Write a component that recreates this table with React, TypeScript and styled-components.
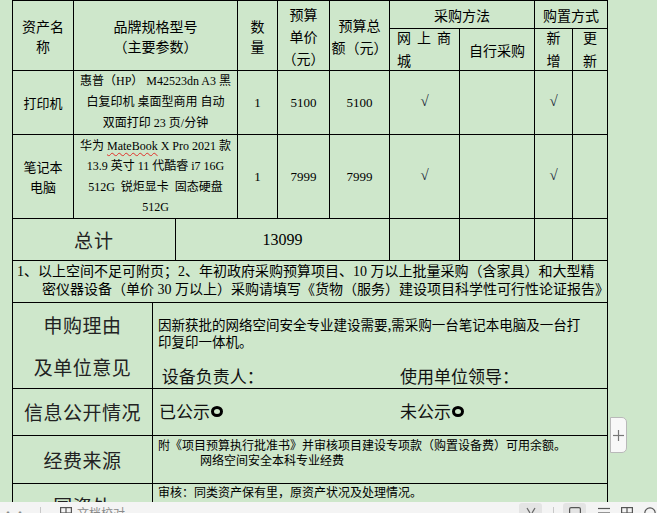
import React from "react";
import styled, { createGlobalStyle } from "styled-components";

const GREEN = "#cee7cb";
const SANS = `"Noto Sans CJK SC", "Noto Sans", sans-serif`;
const MIX = `"Liberation Serif", "Noto Sans CJK SC", serif`;

const Global = createGlobalStyle`
  html, body { margin: 0; padding: 0; background: ${GREEN}; }
  #root { width: 657px; height: 513px; }
`;

const Screen = styled.div`
  width: 657px;
  height: 513px;
  display: flex;
  flex-direction: column;
  overflow: hidden;
  background: ${GREEN};
  color: #000;
  font-family: ${SANS};
`;

const Viewport = styled.div`
  flex: 1;
  min-height: 0;
  position: relative;
  overflow: hidden;
`;

const Sheet = styled.div`
  margin-left: 12px;
  width: 596px;
  box-sizing: border-box;
  border-left: 1px solid #000;
  border-top: 1px solid #000;
`;

const Grid = styled.div<{ $cols: string; $rows: string }>`
  display: grid;
  grid-template-columns: ${(p) => p.$cols};
  grid-template-rows: ${(p) => p.$rows};
`;

const Cell = styled.div<{
  $col?: string;
  $row?: string;
  $left?: boolean;
  $top?: boolean;
  $pad?: string;
}>`
  box-sizing: border-box;
  border-right: 1px solid #000;
  border-bottom: 1px solid #000;
  ${(p) => (p.$col ? `grid-column: ${p.$col};` : "")}
  ${(p) => (p.$row ? `grid-row: ${p.$row};` : "")}
  display: flex;
  flex-direction: column;
  justify-content: ${(p) => (p.$top ? "flex-start" : "center")};
  align-items: ${(p) => (p.$left ? "flex-start" : "center")};
  text-align: ${(p) => (p.$left ? "left" : "center")};
  padding: ${(p) => p.$pad ?? "0"};
  min-width: 0;
  min-height: 0;
`;

const HeadText = styled.div<{ $lh?: number; $spread?: number }>`
  font-size: 14px;
  line-height: ${(p) => p.$lh ?? 20}px;
  letter-spacing: ${(p) => p.$spread ?? 0}px;
  white-space: nowrap;
`;

const ItemName = styled.div`
  font-size: 13px;
  line-height: 20px;
  white-space: nowrap;
`;

const Desc = styled.div<{ $lh: number }>`
  font-family: ${MIX};
  font-size: 12px;
  line-height: ${(p) => p.$lh}px;
  white-space: nowrap;
`;

const Spell = styled.span`
  text-decoration: underline wavy #e0302a;
  text-decoration-thickness: 1px;
  text-underline-offset: 2px;
`;

const Num = styled.div`
  font-family: "Liberation Serif", serif;
  font-size: 13px;
`;

const Check = styled.div`
  font-family: "Liberation Serif", "DejaVu Serif", serif;
  font-size: 15px;
  color: #1d2a3a;
  margin-top: -3px;
`;

const TotalLabel = styled.div`
  font-size: 19px;
  color: #222;
  letter-spacing: 1px;
`;

const TotalNum = styled.div`
  font-family: "Liberation Serif", serif;
  font-size: 16px;
`;

const NoteLine = styled.div<{ $indent: number }>`
  font-family: ${MIX};
  font-size: 14px;
  line-height: 18px;
  padding-left: ${(p) => p.$indent}px;
  white-space: nowrap;
`;

const SideLabel = styled.div<{ $lh?: number }>`
  font-size: 19px;
  line-height: ${(p) => p.$lh ?? 24}px;
  color: #222;
  letter-spacing: 0.5px;
  white-space: nowrap;
`;

const BodyText = styled.div`
  font-size: 13.5px;
  line-height: 17px;
  white-space: nowrap;
`;

const SignRow = styled.div<{ $first: number; $mt?: number }>`
  display: grid;
  grid-template-columns: ${(p) => p.$first}px auto;
  align-items: center;
  margin-top: ${(p) => p.$mt ?? 0}px;
  font-size: 17px;
  line-height: 20px;
  color: #111;
  white-space: nowrap;
`;

const Ring = styled.span`
  display: inline-block;
  width: 6px;
  height: 5px;
  border: 3px solid #000;
  border-radius: 50%;
  margin-left: 1px;
  vertical-align: 1px;
`;

const FundLine = styled.div<{ $indent?: number }>`
  font-size: 12px;
  line-height: 15px;
  padding-left: ${(p) => p.$indent ?? 0}px;
  white-space: nowrap;
`;

const AddTab = styled.div`
  position: absolute;
  left: 610px;
  top: 417px;
  width: 17px;
  height: 36px;
  box-sizing: border-box;
  background: #f8f8f8;
  border: 1px solid #b9b9b9;
  border-radius: 0 5px 5px 0;
  display: flex;
  align-items: center;
  justify-content: center;
`;

const StatusBar = styled.div`
  height: 11px;
  flex: none;
  background: #f4f4f4;
  display: flex;
  justify-content: space-between;
  overflow: hidden;
  color: #444;
`;

const StatusGroup = styled.div`
  display: flex;
  align-items: flex-start;
  height: 11px;
`;

const StatusBtn = styled.div<{ $w: number; $ml: number; $active?: boolean }>`
  width: ${(p) => p.$w}px;
  height: 22px;
  margin-left: ${(p) => p.$ml}px;
  margin-top: 1px;
  border-radius: 3px;
  background: ${(p) => (p.$active ? "#e4e4e4" : "transparent")};
  display: flex;
  justify-content: center;
  padding-top: 4px;
  box-sizing: border-box;
`;

const StatusSep = styled.div<{ $ml: number }>`
  width: 1px;
  height: 14px;
  margin-top: 5px;
  margin-left: ${(p) => p.$ml}px;
  background: #c8c8c8;
`;

const StatusText = styled.div<{ $ml: number }>`
  margin-left: ${(p) => p.$ml}px;
  margin-top: 3px;
  font-size: 12px;
  line-height: 16px;
  color: #8a8a8a;
  white-space: nowrap;
`;

const GridIcon = () => (
  <svg width="12" height="12" viewBox="0 0 12 12" fill="none" stroke="#555" strokeWidth="1.2">
    <rect x="0.6" y="0.6" width="10.8" height="10.8" />
    <line x1="6" y1="0.6" x2="6" y2="11.4" />
    <line x1="0.6" y1="6" x2="11.4" y2="6" />
  </svg>
);

const PageIcon = () => (
  <svg width="12" height="14" viewBox="0 0 12 14" fill="none" stroke="#555" strokeWidth="1.2">
    <rect x="0.6" y="0.6" width="10.8" height="12.8" rx="1.5" />
  </svg>
);

const LinesIcon = () => (
  <svg width="14" height="12" viewBox="0 0 14 12" fill="none" stroke="#555" strokeWidth="1.2">
    <line x1="1" y1="1.5" x2="13" y2="1.5" />
    <line x1="1" y1="6" x2="13" y2="6" />
    <line x1="1" y1="10.5" x2="13" y2="10.5" />
  </svg>
);

const SparkIcon = () => (
  <svg width="14" height="12" viewBox="0 0 14 12" fill="none" stroke="#666" strokeWidth="1.2">
    <line x1="3" y1="1" x2="6" y2="6" />
    <line x1="11" y1="1" x2="8" y2="6" />
  </svg>
);

const RingIcon = () => (
  <svg width="12" height="12" viewBox="0 0 12 12" fill="none" stroke="#555" strokeWidth="1.2">
    <circle cx="6" cy="6" r="5.2" />
  </svg>
);

const TOP_COLS = "61px 164px 40px 52px 60px 70px 75px 38px 35px";
const TOTAL_COLS = "163px 214px 70px 75px 38px 35px";
const LOW_COLS = "140px 455px";

export default function App() {
  return (
    <Screen>
      <Global />
      <Viewport>
        <Sheet>
          <Grid $cols={TOP_COLS} $rows="28px 42px 64px 84px">
            <Cell $col="1" $row="1 / span 2">
              <HeadText>资产名<br />称</HeadText>
            </Cell>
            <Cell $col="2" $row="1 / span 2">
              <HeadText>品牌规格型号<br />（主要参数）</HeadText>
            </Cell>
            <Cell $col="3" $row="1 / span 2">
              <HeadText>数<br />量</HeadText>
            </Cell>
            <Cell $col="4" $row="1 / span 2">
              <HeadText $lh={22}>预算<br />单价<br />（元）</HeadText>
            </Cell>
            <Cell $col="5" $row="1 / span 2">
              <HeadText $lh={22}>预算总<br />额（元）</HeadText>
            </Cell>
            <Cell $col="6 / span 2" $row="1">
              <HeadText>采购方法</HeadText>
            </Cell>
            <Cell $col="8 / span 2" $row="1">
              <HeadText>购置方式</HeadText>
            </Cell>
            <Cell $col="6" $row="2" $left $pad="0 0 2px 7px">
              <HeadText $lh={23} $spread={6}>网上商<br />城</HeadText>
            </Cell>
            <Cell $col="7" $row="2">
              <HeadText>自行采购</HeadText>
            </Cell>
            <Cell $col="8" $row="2" $pad="0 0 2px 0">
              <HeadText $lh={23}>新<br />增</HeadText>
            </Cell>
            <Cell $col="9" $row="2" $pad="0 0 2px 0">
              <HeadText $lh={23}>更<br />新</HeadText>
            </Cell>

            <Cell>
              <ItemName>打印机</ItemName>
            </Cell>
            <Cell>
              <Desc $lh={21}>
                惠普（HP） M42523dn A3 黑<br />
                白复印机 桌面型商用 自动<br />
                双面打印 23 页/分钟
              </Desc>
            </Cell>
            <Cell><Num>1</Num></Cell>
            <Cell><Num>5100</Num></Cell>
            <Cell><Num>5100</Num></Cell>
            <Cell><Check>√</Check></Cell>
            <Cell />
            <Cell><Check>√</Check></Cell>
            <Cell />

            <Cell>
              <ItemName>笔记本<br />电脑</ItemName>
            </Cell>
            <Cell>
              <Desc $lh={20.5}>
                华为 <Spell>MateBook</Spell> X Pro 2021 款<br />
                13.9 英寸 11 代酷睿 i7 16G<br />
                512G&nbsp; 锐炬显卡&nbsp; 固态硬盘<br />
                512G
              </Desc>
            </Cell>
            <Cell><Num>1</Num></Cell>
            <Cell><Num>7999</Num></Cell>
            <Cell><Num>7999</Num></Cell>
            <Cell><Check>√</Check></Cell>
            <Cell />
            <Cell><Check>√</Check></Cell>
            <Cell />
          </Grid>

          <Grid $cols={TOTAL_COLS} $rows="42px">
            <Cell><TotalLabel>总计</TotalLabel></Cell>
            <Cell><TotalNum>13099</TotalNum></Cell>
            <Cell />
            <Cell />
            <Cell />
            <Cell />
          </Grid>

          <Grid $cols="595px" $rows="42px">
            <Cell $left $top $pad="2px 0 0 0">
              <NoteLine $indent={4}>
                1、以上空间不足可附页；2、年初政府采购预算项目、10 万以上批量采购（含家具）和大型精
              </NoteLine>
              <NoteLine $indent={29}>
                密仪器设备（单价 30 万以上）采购请填写《货物（服务）建设项目科学性可行性论证报告》
              </NoteLine>
            </Cell>
          </Grid>

          <Grid $cols={LOW_COLS} $rows="86px 47px 48px 60px">
            <Cell>
              <SideLabel $lh={42}>申购理由<br />及单位意见</SideLabel>
            </Cell>
            <Cell $left $top $pad="13px 0 0 5px">
              <BodyText>
                因新获批的网络空间安全专业建设需要,需采购一台笔记本电脑及一台打<br />
                印复印一体机。
              </BodyText>
              <SignRow $first={242} $mt={16}>
                <span>&nbsp;设备负责人：</span>
                <span>使用单位领导：</span>
              </SignRow>
            </Cell>

            <Cell>
              <SideLabel>信息公开情况</SideLabel>
            </Cell>
            <Cell $left $pad="0 0 2px 6px">
              <SignRow $first={241}>
                <span>已公示<Ring /></span>
                <span>未公示<Ring /></span>
              </SignRow>
            </Cell>

            <Cell>
              <SideLabel>经费来源</SideLabel>
            </Cell>
            <Cell $left $top $pad="1px 0 0 5px">
              <FundLine>附《项目预算执行批准书》并审核项目建设专项款（购置设备费）可用余额。</FundLine>
              <FundLine $indent={42}>网络空间安全本科专业经费</FundLine>
            </Cell>

            <Cell $top $pad="10px 0 0 0">
              <SideLabel>国资处</SideLabel>
            </Cell>
            <Cell $left $top $pad="0 0 0 5px">
              <FundLine>审核：同类资产保有里，原资产状况及处理情况。</FundLine>
            </Cell>
          </Grid>
        </Sheet>

        <AddTab>
          <svg width="11" height="11" viewBox="0 0 11 11" stroke="#777" strokeWidth="1.2">
            <line x1="5.5" y1="0" x2="5.5" y2="11" />
            <line x1="0" y1="5.5" x2="11" y2="5.5" />
          </svg>
        </AddTab>
      </Viewport>

      <StatusBar>
        <StatusGroup>
          <StatusText $ml={2}>··</StatusText>
          <StatusSep $ml={14} />
          <StatusBtn $w={14} $ml={18}>
            <GridIcon />
          </StatusBtn>
          <StatusText $ml={4}>文档校对</StatusText>
        </StatusGroup>
        <StatusGroup>
          <StatusBtn $w={23} $ml={0} $active>
            <SparkIcon />
          </StatusBtn>
          <StatusSep $ml={11} />
          <StatusBtn $w={23} $ml={9} $active>
            <PageIcon />
          </StatusBtn>
          <StatusBtn $w={18} $ml={9}>
            <LinesIcon />
          </StatusBtn>
          <StatusBtn $w={16} $ml={6}>
            <GridIcon />
          </StatusBtn>
          <StatusBtn $w={14} $ml={8}>
            <RingIcon />
          </StatusBtn>
        </StatusGroup>
      </StatusBar>
    </Screen>
  );
}
